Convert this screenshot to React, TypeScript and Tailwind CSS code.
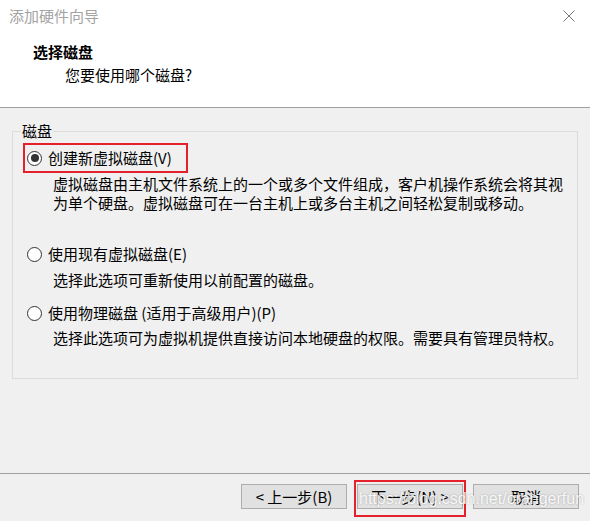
import React from "react";

const font = "font-['Noto_Sans_CJK_SC','Noto_Sans',sans-serif]";

const Radio = ({ checked }: { checked?: boolean }) => (
  <span className="flex h-[15px] w-[15px] flex-shrink-0 items-center justify-center rounded-full border border-[#333333] bg-white">
    {checked && <span className="h-[8px] w-[8px] rounded-full bg-[#333333]" />}
  </span>
);

const Option = ({ label, checked, className }: { label: string; checked?: boolean; className?: string }) => (
  <div className={`ml-[14px] flex h-[20px] items-center gap-[6px] ${className ?? ""}`}>
    <Radio checked={checked} />
    <span className="leading-[20px]">{label}</span>
  </div>
);

const WizardButton = ({ children }: { children: React.ReactNode }) => (
  <button className="flex h-[25px] w-[106px] items-center justify-center border border-[#adadad] bg-[#e1e1e1] text-[15px] leading-[20px] text-black">
    {children}
  </button>
);

const App = () => {
  return (
    <div className={`relative flex h-[521px] w-[590px] flex-col overflow-hidden bg-[#f0f0f0] text-[15px] text-black ${font}`}>
      {/* header */}
      <div className="h-[108px] flex-shrink-0 border-b border-[#a0a0a0] bg-white">
        <div className="flex h-[32px] items-center justify-between pl-[9px] pr-[15px]">
          <span className="leading-[20px] text-[#a3a3a3]">添加硬件向导</span>
          <svg width="12" height="12" viewBox="0 0 12 12" className="text-[#777777]">
            <path d="M0.5 0.5 L11.5 11.5 M11.5 0.5 L0.5 11.5" stroke="currentColor" strokeWidth="1" fill="none" />
          </svg>
        </div>
        <div className="mt-[10px] pl-[33px] font-bold leading-[20px]">选择磁盘</div>
        <div className="mt-[3px] pl-[65px] leading-[20px]">您要使用哪个磁盘?</div>
      </div>

      {/* body */}
      <div className="flex-1">
        <fieldset className="mx-[12px] mt-[13px] border border-[#dcdcdc] pb-[31px]">
          <legend className="ml-[8px] px-[1px] leading-[20px]">磁盘</legend>
          <Option className="mt-[7px]" label="创建新虚拟磁盘(V)" checked />
          <p className="ml-[40px] mt-[6px] leading-[19px]">
            虚拟磁盘由主机文件系统上的一个或多个文件组成，客户机操作系统会将其视
            <br />
            为单个硬盘。虚拟磁盘可在一台主机上或多台主机之间轻松复制或移动。
          </p>
          <Option className="mt-[32px]" label="使用现有虚拟磁盘(E)" />
          <p className="ml-[40px] mt-[6px] leading-[19px]">选择此选项可重新使用以前配置的磁盘。</p>
          <Option className="mt-[14px]" label="使用物理磁盘 (适用于高级用户)(P)" />
          <p className="ml-[40px] mt-[5px] leading-[19px]">
            选择此选项可为虚拟机提供直接访问本地硬盘的权限。需要具有管理员特权。
          </p>
        </fieldset>
      </div>

      {/* footer */}
      <div className="h-[48px] flex-shrink-0 border-t border-[#a0a0a0]">
        <div className="mt-[10px] flex justify-end gap-[10px] pr-[11px]">
          <WizardButton>&lt; 上一步(B)</WizardButton>
          <WizardButton>下一步(N) &gt;</WizardButton>
          <WizardButton>取消</WizardButton>
        </div>
      </div>

      {/* red annotation boxes */}
      <div className="pointer-events-none absolute left-[23px] top-[143px] h-[30px] w-[165px] border-2 border-[#e3202b]" />
      <div className="pointer-events-none absolute left-[354px] top-[480px] h-[37px] w-[112px] border-2 border-[#e3202b]" />

      {/* watermark */}
      <div className="pointer-events-none absolute left-[359px] top-[489px] whitespace-nowrap font-['Liberation_Sans',sans-serif] text-[16px] leading-[20px] text-white/90 [text-shadow:0_0_2px_rgba(0,0,0,0.3)]">
        https://blog.csdn.net/orangerfun
      </div>
    </div>
  );
};

export default App;
